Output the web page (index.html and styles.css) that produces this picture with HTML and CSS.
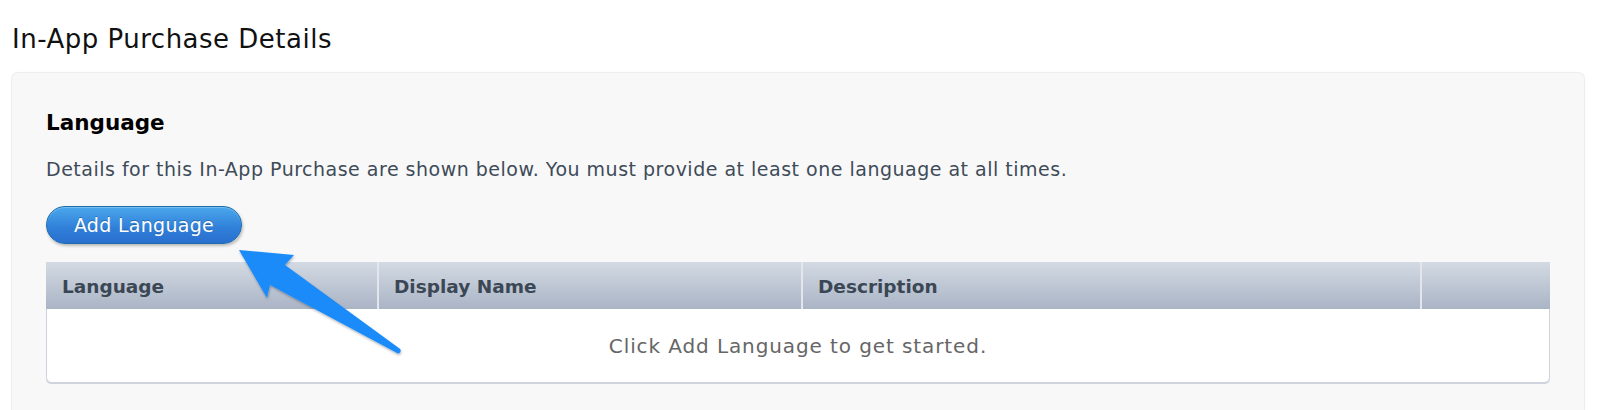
FILE: index.html
```html
<!DOCTYPE html>
<html>
<head>
<meta charset="utf-8">
<link rel="stylesheet" href="styles.css">
</head>
<body>
<h1 class="page-title">In-App Purchase Details</h1>
<section class="panel">
  <h2 class="panel-heading">Language</h2>
  <p class="panel-desc">Details for this In-App Purchase are shown below. You must provide at least one language at all times.</p>
  <button class="btn-add">Add Language</button>
  <table class="lang-table">
    <thead>
      <tr>
        <th class="col-lang">Language</th>
        <th class="col-name">Display Name</th>
        <th class="col-desc">Description</th>
        <th class="col-act"></th>
      </tr>
    </thead>
    <tbody>
      <tr>
        <td class="empty" colspan="4">Click Add Language to get started.</td>
      </tr>
    </tbody>
  </table>
</section>
<svg class="callout-arrow" width="200" height="140" viewBox="0 0 200 140">
  <defs>
    <filter id="sh" x="-20%" y="-20%" width="140%" height="140%">
      <feDropShadow dx="0.5" dy="1.5" stdDeviation="1.2" flood-color="#000" flood-opacity="0.3"/>
    </filter>
  </defs>
  <path d="M9 10 L64 15 L55 25 L169.5 108.5 A2.6 2.6 0 0 1 166.5 112.8 L40 45 L37 58 Z" fill="#1b8bfa" filter="url(#sh)"/>
</svg>
</body>
</html>
```
FILE: styles.css
```css
html, body {
  margin: 0;
  padding: 0;
  background: #ffffff;
}
body {
  font-family: "DejaVu Sans", "Liberation Sans", sans-serif;
  width: 1600px;
  height: 410px;
  overflow: hidden;
  position: relative;
}
.page-title {
  margin: 0;
  padding: 23px 0 0 12px;
  font-size: 26px;
  font-weight: normal;
  line-height: 32px;
  color: #111;
  letter-spacing: 0.5px;
}
.panel {
  margin: 18px 16px 0 12px;
  background: #f8f8f8;
  border-radius: 6px 6px 0 0;
  box-shadow: 0 0 0 1px #eeeeee, 0 0 3px rgba(0,0,0,0.06);
  padding: 34px 34px 0 34px;
  height: 337px;
  box-sizing: border-box;
}
.panel-heading {
  margin: 0;
  font-size: 21.5px;
  font-weight: bold;
  line-height: 32px;
  color: #000;
}
.panel-desc {
  margin: 17px 0 0 0;
  font-size: 19px;
  line-height: 26px;
  letter-spacing: 0.5px;
  color: #3e4b59;
}
.btn-add {
  margin-top: 24px;
  display: block;
  width: 196px;
  height: 38px;
  border-radius: 19px;
  border: 1px solid #1c6eaa;
  background: linear-gradient(#4ba7ec, #2f7ed8 60%, #2a6fcf);
  box-shadow: inset 0 1px 0 rgba(255,255,255,0.25), 1px 2px 3px rgba(0,0,0,0.25);
  color: #fff;
  font-family: "DejaVu Sans", "Liberation Sans", sans-serif;
  font-size: 19px;
  letter-spacing: 0.3px;
  text-shadow: 0 -1px 0 rgba(0,0,0,0.25);
  padding: 0;
}
.lang-table {
  margin-top: 18px;
  width: 1504px;
  border-collapse: separate;
  border-spacing: 0;
  background: #fff;
  border-radius: 0 0 5px 5px;
  box-shadow: 0 2px 0 #cfd4dc;
}
.lang-table th {
  height: 47px;
  padding: 2px 15px 0 15px;
  text-align: left;
  font-size: 18.5px;
  font-weight: bold;
  color: #3b4755;
  background: linear-gradient(#d3dae3, #aab4c5);
  border-left: 2px solid #e3e7ec;
  box-sizing: border-box;
}
.lang-table th.col-lang { border-left: none; padding-left: 16px; width: 331px; }
.lang-table th.col-name { width: 424px; }
.lang-table th.col-desc { width: 619px; }
.lang-table th.col-act { width: 130px; }
.lang-table td.empty {
  height: 73px;
  text-align: center;
  font-size: 20px;
  letter-spacing: 0.9px;
  color: #666;
  border-left: 1px solid #cdd2db;
  border-right: 1px solid #cdd2db;
  border-radius: 0 0 5px 5px;
  padding: 0;
  box-sizing: border-box;
}
.callout-arrow {
  position: absolute;
  left: 230px;
  top: 240px;
  pointer-events: none;
}
```
